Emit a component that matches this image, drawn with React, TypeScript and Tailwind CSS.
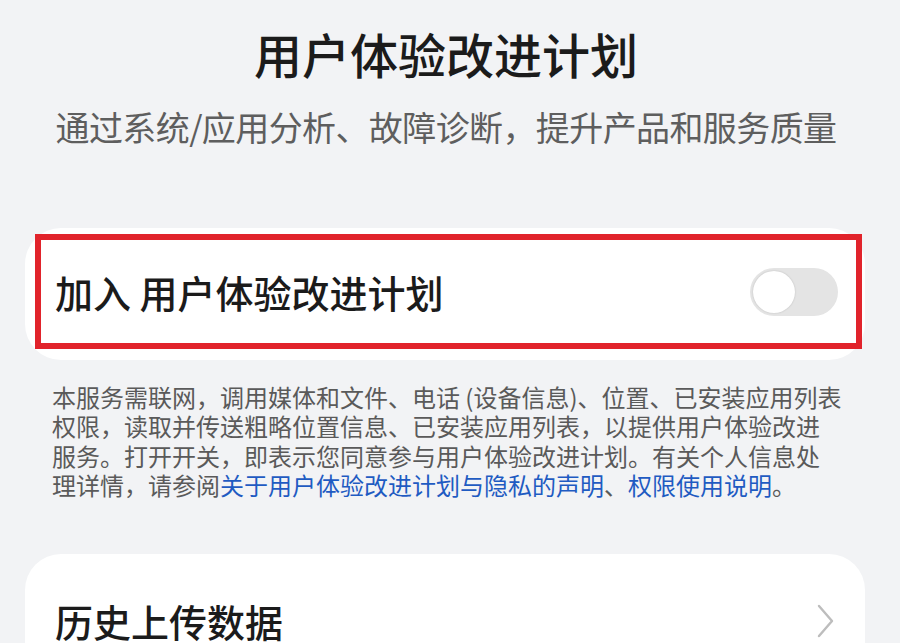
function Toggle(): JSX.Element {
  return (
    <div className="flex h-[48px] w-[88px] items-center rounded-full bg-[#e4e4e4] pl-[3px]">
      <div className="size-[42px] rounded-full bg-white shadow-[0_0_2px_rgba(0,0,0,0.18)]" />
    </div>
  );
}

function ChevronRight(): JSX.Element {
  return (
    <svg width="18" height="34" viewBox="0 0 18 34" fill="none">
      <path d="M2 2 L15 17 L2 32" stroke="#bdbdbd" strokeWidth="2.4" strokeLinecap="round" strokeLinejoin="round" />
    </svg>
  );
}

export default function App(): JSX.Element {
  return (
    <div className="h-[643px] w-[900px] overflow-hidden bg-[#f2f3f5] font-['Noto_Sans_CJK_SC',sans-serif]">
      <div className="w-[892px]">
        <div className="flex h-[106px] items-center justify-center text-[48px] font-medium leading-none text-[#1b1b1b]">
          用户体验改进计划
        </div>
        <div className="flex h-[42px] items-center justify-center text-[34px] leading-none tracking-[-0.6px] text-[#5e5e5e]">
          通过系统/应用分析、故障诊断，提升产品和服务质量
        </div>

        <div className="ml-[25px] mt-[80px] w-[840px] rounded-[36px] bg-white pb-[11px] pl-[10px] pr-[3px] pt-[6px]">
          <div className="flex h-[115px] items-center justify-between border-[6px] border-[#e1232b] pl-[14px] pr-[18px]">
            <span className="text-[38px] font-medium leading-none text-[#1b1b1b]">加入 用户体验改进计划</span>
            <Toggle />
          </div>
        </div>

        <div className="ml-[52px] mt-[22px] whitespace-nowrap text-[24px] leading-[29.3px] text-[#5a5a5a]">
          <div>本服务需联网，调用媒体和文件、电话 (设备信息)、位置、已安装应用列表</div>
          <div>权限，读取并传送粗略位置信息、已安装应用列表，以提供用户体验改进</div>
          <div>服务。打开开关，即表示您同意参与用户体验改进计划。有关个人信息处</div>
          <div>
            理详情，请参阅<span className="text-[#1f5bc2]">关于用户体验改进计划与隐私的声明</span>、<span className="text-[#1f5bc2]">权限使用说明</span>。
          </div>
        </div>

        <div className="ml-[25px] mt-[55px] h-[140px] w-[840px] rounded-t-[36px] bg-white">
          <div className="flex items-center justify-between pl-[30px] pr-[30px] pt-[48px]">
            <span className="text-[38px] font-medium leading-none text-[#1b1b1b]">历史上传数据</span>
            <ChevronRight />
          </div>
        </div>
      </div>
    </div>
  );
}
